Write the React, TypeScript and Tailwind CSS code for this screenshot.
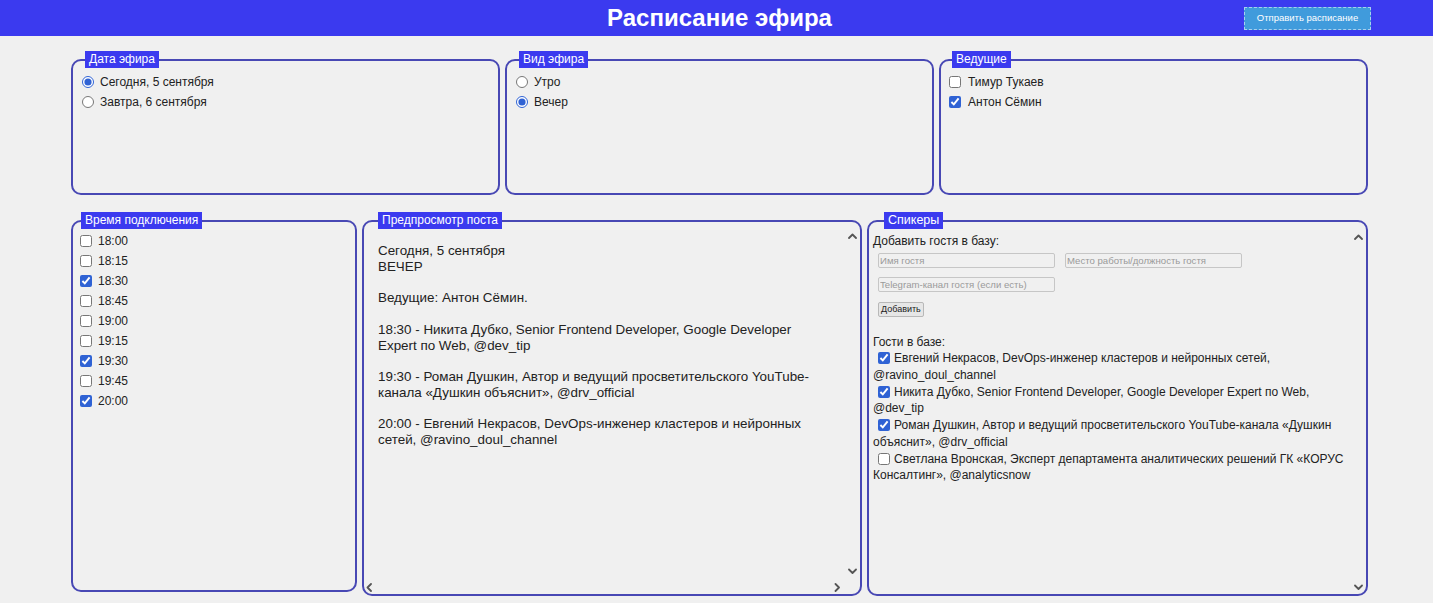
import React from "react";

const Chevron = ({ dir, className }: { dir: "up" | "down" | "left" | "right"; className: string }) => {
  const pts: Record<string, string> = {
    up: "1,6 4.5,2.5 8,6",
    down: "1,2.5 4.5,6 8,2.5",
    left: "6,1 2.5,4.5 6,8",
    right: "2.5,1 6,4.5 2.5,8",
  };
  return (
    <svg viewBox="0 0 9 9" className={className} fill="none" stroke="#555" strokeWidth="1.8" strokeLinecap="round" strokeLinejoin="round">
      <polyline points={pts[dir]} />
    </svg>
  );
};

const Legend = ({ children, className = "" }: { children: React.ReactNode; className?: string }) => (
  <legend className={`bg-[#3b3aef] text-white text-[12px] leading-[17px] px-[4px] ${className}`}>{children}</legend>
);

const Radio = ({ label, checked }: { label: string; checked?: boolean }) => (
  <label className="flex items-center h-[20px] text-[12px] text-[#222]">
    <input type="radio" defaultChecked={checked} className="m-0 w-[12px] h-[12px] accent-[#2f62d4]" />
    <span className="ml-[6px]">{label}</span>
  </label>
);

const Check = ({ label, checked, gap = "ml-[7px]" }: { label: string; checked?: boolean; gap?: string }) => (
  <label className="flex items-center h-[20px] text-[12px] text-[#222]">
    <input type="checkbox" defaultChecked={checked} className="m-0 w-[12px] h-[12px] accent-[#2f62d4]" />
    <span className={gap}>{label}</span>
  </label>
);

const times: [string, boolean][] = [
  ["18:00", false],
  ["18:15", false],
  ["18:30", true],
  ["18:45", false],
  ["19:00", false],
  ["19:15", false],
  ["19:30", true],
  ["19:45", false],
  ["20:00", true],
];

const guests: [string, boolean][] = [
  ["Евгений Некрасов, DevOps-инженер кластеров и нейронных сетей, @ravino_doul_channel", true],
  ["Никита Дубко, Senior Frontend Developer, Google Developer Expert по Web, @dev_tip", true],
  ["Роман Душкин, Автор и ведущий просветительского YouTube-канала «Душкин объяснит», @drv_official", true],
  ["Светлана Вронская, Эксперт департамента аналитических решений ГК «КОРУС Консалтинг», @analyticsnow", false],
];

const preview = `Сегодня, 5 сентября
ВЕЧЕР

Ведущие: Антон Сёмин.

18:30 - Никита Дубко, Senior Frontend Developer, Google Developer Expert по Web, @dev_tip

19:30 - Роман Душкин, Автор и ведущий просветительского YouTube-канала «Душкин объяснит», @drv_official

20:00 - Евгений Некрасов, DevOps-инженер кластеров и нейронных сетей, @ravino_doul_channel`;

const box = "border-2 border-[#4848b4] rounded-[10px] min-w-0";
const inputCls =
  "block w-[177px] h-[15px] border border-[#c6c6c6] rounded-[2px] bg-[#f0f0f0] text-[9.6px] px-[1px] placeholder:text-[#9a9a9a] outline-none";

export default function App() {
  return (
    <div className="min-h-screen bg-[#f0f0f0] font-['Liberation_Sans',Arial,sans-serif] text-[#222]">
      <header className="h-[36px] bg-[#3b3aef] grid grid-cols-[1fr_auto_1fr] items-center">
        <div />
        <h1 className="text-white font-bold text-[24px] leading-none pl-[6px]">Расписание эфира</h1>
        <div className="flex justify-end pr-[62px]">
          <button className="w-[127px] h-[23px] bg-[#409bdc] border border-dashed border-[#a9d0ee] text-white text-[9.5px] leading-none">
            Отправить расписание
          </button>
        </div>
      </header>

      <main className="pl-[71px] pr-[65px]">
        <div className="grid grid-cols-3 gap-[5px] mt-[15px]">
          <fieldset className={`${box} h-[144px] pl-[9px]`}>
            <Legend className="ml-[3px]">Дата эфира</Legend>
            <div className="mt-[4px]">
              <Radio label="Сегодня, 5 сентября" checked />
              <Radio label="Завтра, 6 сентября" />
            </div>
          </fieldset>
          <fieldset className={`${box} h-[144px] pl-[9px]`}>
            <Legend className="ml-[3px]">Вид эфира</Legend>
            <div className="mt-[4px]">
              <Radio label="Утро" />
              <Radio label="Вечер" checked />
            </div>
          </fieldset>
          <fieldset className={`${box} h-[144px] pl-[8px]`}>
            <Legend className="ml-[3px]">Ведущие</Legend>
            <div className="mt-[4px]">
              <Check label="Тимур Тукаев" />
              <Check label="Антон Сёмин" checked />
            </div>
          </fieldset>
        </div>

        <div className="grid grid-cols-[286px_500px_1fr] gap-[5px] mt-[17px] items-start">
          <fieldset className={`${box} h-[380px] pl-[7px]`}>
            <Legend className="ml-[1px]">Время подключения</Legend>
            <div className="mt-[2px]">
              {times.map(([t, c]) => (
                <Check key={t} label={t} checked={c} gap="ml-[6px]" />
              ))}
            </div>
          </fieldset>

          <fieldset className={`${box} h-[384px] pl-[14px] relative`}>
            <Legend>Предпросмотр поста</Legend>
            <div className="w-[440px] mt-[14px] whitespace-pre-wrap text-[13.4px] leading-[15.75px] text-[#222]">{preview}</div>
            <Chevron dir="up" className="absolute right-[3px] top-[3px] w-[9px] h-[9px]" />
            <Chevron dir="down" className="absolute right-[3px] bottom-[18px] w-[9px] h-[9px]" />
            <Chevron dir="left" className="absolute left-[1px] bottom-[2px] w-[9px] h-[9px]" />
            <Chevron dir="right" className="absolute right-[18px] bottom-[2px] w-[9px] h-[9px]" />
          </fieldset>

          <fieldset className={`${box} h-[384px] pl-[4px] relative`}>
            <legend className="bg-[#3b3aef] text-white text-[12.5px] leading-[17px] px-[4px] ml-[11px]">Спикеры</legend>
            <div className="w-[482px] text-[12px] text-[#222]">
              <div className="leading-[16px] mt-[4px]">Добавить гостя в базу:</div>
              <div className="flex gap-[10px] mt-[4px] pl-[5px]">
                <input placeholder="Имя гостя" className={inputCls} />
                <input placeholder="Место работы/должность гостя" className={inputCls} />
              </div>
              <div className="flex mt-[9px] pl-[5px]">
                <input placeholder="Telegram-канал гостя (если есть)" className={inputCls} />
              </div>
              <div className="flex mt-[10px] pl-[5px]">
                <button className="h-[15px] px-[2px] bg-[#e6e6e6] border border-[#b8b8b8] rounded-[2px] text-[9px] leading-none text-[#222]">Добавить</button>
              </div>
              <div className="leading-[16px] mt-[17px]">Гости в базе:</div>
              {guests.map(([g, c]) => (
                <div key={g} className="leading-[16.75px]">
                  <input type="checkbox" defaultChecked={c} className="m-0 ml-[5px] mr-[4px] w-[12px] h-[12px] align-[-2px] accent-[#2f62d4]" />
                  {g}
                </div>
              ))}
            </div>
            <Chevron dir="up" className="absolute right-[3px] top-[4px] w-[9px] h-[9px]" />
            <Chevron dir="down" className="absolute right-[3px] bottom-[2px] w-[9px] h-[9px]" />
          </fieldset>
        </div>
      </main>
    </div>
  );
}
